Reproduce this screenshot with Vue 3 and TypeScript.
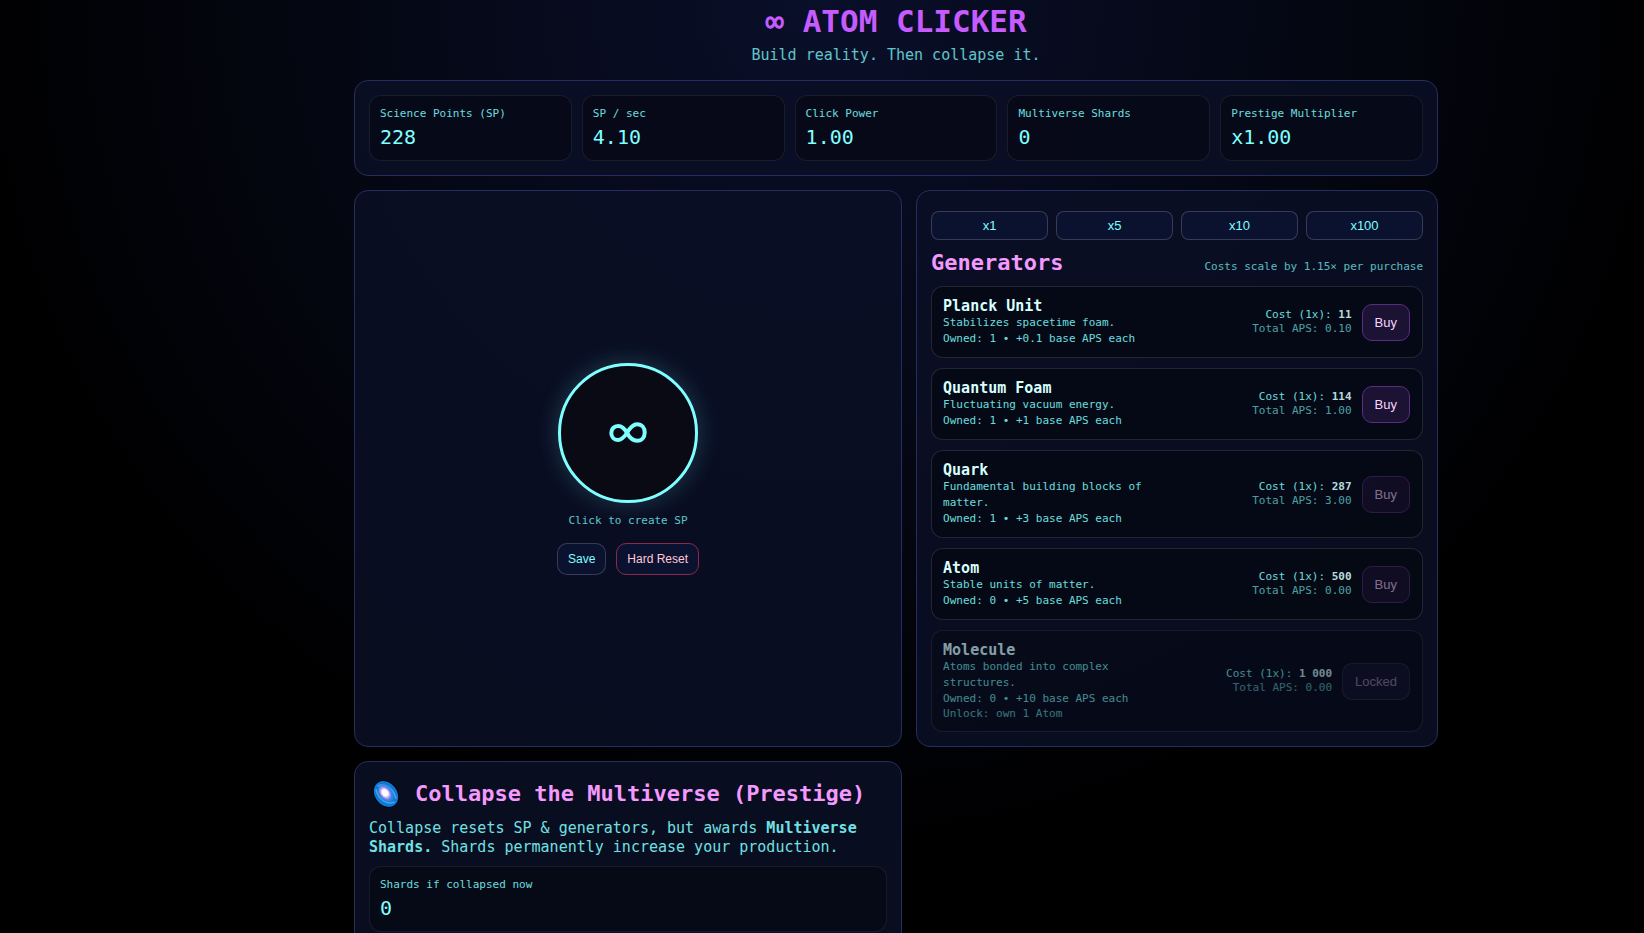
<script setup lang="ts">
import { ref } from 'vue'

interface Stat {
  label: string
  value: string
}

interface Generator {
  name: string
  description: string
  owned: number
  base: string
  cost: string
  total: string
  affordable: boolean
  unlock?: string
}

const stats: Stat[] = [
  { label: 'Science Points (SP)', value: '228' },
  { label: 'SP / sec', value: '4.10' },
  { label: 'Click Power', value: '1.00' },
  { label: 'Multiverse Shards', value: '0' },
  { label: 'Prestige Multiplier', value: 'x1.00' },
]

const amounts = [1, 5, 10, 100]
const amount = ref(1)

const generators: Generator[] = [
  { name: 'Planck Unit', description: 'Stabilizes spacetime foam.', owned: 1, base: '0.1', cost: '11', total: '0.10', affordable: true },
  { name: 'Quantum Foam', description: 'Fluctuating vacuum energy.', owned: 1, base: '1', cost: '114', total: '1.00', affordable: true },
  { name: 'Quark', description: 'Fundamental building blocks of matter.', owned: 1, base: '3', cost: '287', total: '3.00', affordable: false },
  { name: 'Atom', description: 'Stable units of matter.', owned: 0, base: '5', cost: '500', total: '0.00', affordable: false },
  { name: 'Molecule', description: 'Atoms bonded into complex structures.', owned: 0, base: '10', cost: '1 000', total: '0.00', affordable: false, unlock: 'own 1 Atom' },
]
</script>

<template>
  <div class="page">
    <main class="game">
      <header class="masthead">
        <h1>∞ ATOM CLICKER</h1>
        <p>Build reality. Then collapse it.</p>
      </header>

      <section class="panel stats">
        <div v-for="stat in stats" :key="stat.label" class="stat">
          <div class="stat-label">{{ stat.label }}</div>
          <div class="stat-value">{{ stat.value }}</div>
        </div>
      </section>

      <div class="columns">
        <section class="panel clicker">
          <button class="atom" type="button" aria-label="Create SP">
            <svg viewBox="0 0 38 22" width="38" height="22" aria-hidden="true">
              <path d="M18 11C15.500 6.500 12.800 4 9.200 4C5 4 2.300 7 2.300 11S5 18 8.800 18C12.600 18 15.200 15.200 18 11C21 5.500 24.200 2.200 28.200 2.200C32.800 2.200 35.700 5.600 35.700 10.500S32.800 18.800 28.200 18.800C24 18.800 20.800 16 18 11Z" />
            </svg>
          </button>
          <p class="hint">Click to create SP</p>
          <div class="actions">
            <button class="action" type="button">Save</button>
            <button class="action danger" type="button">Hard Reset</button>
          </div>
        </section>

        <section class="panel shop">
          <div class="amounts">
            <button v-for="n in amounts" :key="n" type="button" @click="amount = n">x{{ n }}</button>
          </div>
          <div class="shop-head">
            <h2>Generators</h2>
            <span>Costs scale by 1.15× per purchase</span>
          </div>
          <ul class="generators">
            <li v-for="g in generators" :key="g.name" class="generator" :class="{ locked: g.unlock }">
              <div class="info">
                <h3>{{ g.name }}</h3>
                <p>{{ g.description }}</p>
                <p>Owned: {{ g.owned }} • +{{ g.base }} base APS each</p>
                <p v-if="g.unlock" class="unlock">Unlock: {{ g.unlock }}</p>
              </div>
              <div class="cost">
                <div class="price">Cost ({{ amount }}x): <strong>{{ g.cost }}</strong></div>
                <div class="total">Total APS: {{ g.total }}</div>
              </div>
              <button class="buy" type="button" :disabled="!g.affordable">{{ g.unlock ? 'Locked' : 'Buy' }}</button>
            </li>
          </ul>
        </section>

        <section class="panel prestige">
          <h2>
            <svg class="galaxy" viewBox="0 0 33 30" width="33" height="30" aria-hidden="true">
              <g transform="rotate(52 17 15)">
                <ellipse cx="17" cy="15" rx="15" ry="12" fill="#020306" />
                <ellipse cx="17" cy="15" rx="14" ry="11" fill="#0d78d6" />
                <path d="M5.500 17C7 9 17 5.500 27 10M28.500 13C27 21 17 24.500 7 20" fill="none" stroke="#45a4ee" stroke-width="1.500" />
                <ellipse cx="16.500" cy="15" rx="9.500" ry="6.500" fill="#2f86e0" />
                <ellipse cx="15.500" cy="15" rx="7.500" ry="5" fill="#a48bf0" />
                <ellipse cx="15.500" cy="15" rx="5.400" ry="3.800" fill="#dccfff" />
                <ellipse cx="15.500" cy="15" rx="3.600" ry="3" fill="#ffffff" />
              </g>
            </svg>
            <span>Collapse the Multiverse (Prestige)</span>
          </h2>
          <p class="blurb">
            Collapse resets SP &amp; generators, but awards <strong>Multiverse</strong> <strong>Shards.</strong> Shards permanently increase your production.
          </p>
          <div class="stat">
            <div class="stat-label">Shards if collapsed now</div>
            <div class="stat-value">0</div>
          </div>
        </section>
      </div>
    </main>
  </div>
</template>

<style>
body {
  margin: 0;
  background: #000;
}
</style>

<style scoped>
.page {
  box-sizing: border-box;
  height: 100vh;
  overflow: hidden;
  padding-left: 148px;
  background: radial-gradient(circle at top, #0a0f2a, #000 70%);
  color: #7fffff;
  font-family: Consolas, "DejaVu Sans Mono", monospace;
  font-size: 15px;
  line-height: 19px;
}

h1, h2, h3, p, ul {
  margin: 0;
  padding: 0;
}

button {
  box-sizing: border-box;
  font-family: Arial, "Liberation Sans", sans-serif;
  line-height: 15px;
  cursor: pointer;
}

.game {
  max-width: 1084px;
  margin: 0 auto;
}

.masthead {
  padding: 2px 0 15px;
  text-align: center;
}

.masthead h1 {
  color: #c65cff;
  font-size: 31px;
  line-height: 38px;
}

.masthead p {
  margin-top: 6px;
  opacity: 0.75;
}

.panel {
  box-sizing: border-box;
  border: 1px solid #262e60;
  border-radius: 14px;
  padding: 14px;
  background: rgba(10, 15, 38, 0.85);
}

.stats {
  display: grid;
  grid-template-columns: repeat(5, 1fr);
  gap: 10px;
}

.stat {
  border: 1px solid rgba(255, 255, 255, 0.08);
  border-radius: 12px;
  padding: 10px;
  background: rgba(5, 7, 17, 0.6);
}

.stat-label {
  font-size: 11px;
  line-height: 16px;
  opacity: 0.85;
}

.stat-value {
  margin-top: 3px;
  padding-bottom: 1px;
  font-size: 20px;
  line-height: 24px;
}

.columns {
  display: grid;
  grid-template-columns: 1.05fr 1fr;
  gap: 14px;
  margin-top: 14px;
}

.clicker {
  display: flex;
  flex-direction: column;
  align-items: center;
  justify-content: center;
}

.atom {
  display: grid;
  place-items: center;
  width: 140px;
  height: 140px;
  border: 3px solid #7fffff;
  border-radius: 50%;
  padding: 0;
  background: #0a0a14;
  box-shadow: 0 0 24px rgba(125, 249, 255, 0.2);
}

.atom path {
  fill: none;
  stroke: #7fffff;
  stroke-width: 4;
}

.hint {
  margin-top: 10px;
  font-size: 11px;
  line-height: 16px;
  opacity: 0.75;
}

.actions {
  display: flex;
  gap: 10px;
  margin-top: 14px;
}

.action {
  border: 1px solid rgba(255, 255, 255, 0.18);
  border-radius: 10px;
  padding: 8px 10px;
  background: #0a1230;
  color: #7fffff;
  font-size: 12px;
  line-height: 14px;
}

.action.danger {
  border-color: #8a2a4c;
  color: #ffc9d6;
}

.amounts {
  display: grid;
  grid-template-columns: repeat(4, 1fr);
  gap: 8px;
  margin-top: 6px;
}

.amounts button {
  border: 1px solid rgba(255, 255, 255, 0.18);
  border-radius: 8px;
  padding: 6px;
  background: #0a1230;
  color: #7fffff;
  font-size: 13px;
}

.shop-head {
  display: flex;
  align-items: baseline;
  justify-content: space-between;
  margin: 9px 0;
}

h2 {
  color: #f49aff;
  font-size: 22px;
  line-height: 28px;
}

.shop-head span {
  font-size: 11px;
  opacity: 0.7;
}

.generators {
  display: grid;
  gap: 10px;
  list-style: none;
}

.generator {
  display: flex;
  align-items: center;
  gap: 10px;
  border: 1px solid rgba(255, 255, 255, 0.12);
  border-radius: 12px;
  padding: 10px 12px 10px 11px;
  background: rgba(4, 6, 14, 0.6);
}

.info {
  max-width: 220px;
}

.info h3 {
  color: #d8ffff;
  font-size: 15px;
  line-height: 18px;
}

.info p {
  font-size: 11px;
  line-height: 16px;
  opacity: 0.85;
}

.info .unlock {
  line-height: 14px;
  opacity: 0.7;
}

.cost {
  margin-left: auto;
  font-size: 11px;
  line-height: 14px;
  text-align: right;
}

.price {
  opacity: 0.85;
}

.price strong {
  color: #d8ffff;
}

.total {
  opacity: 0.6;
}

.buy {
  border: 1px solid #5a2d80;
  border-radius: 10px;
  padding: 10px 12px;
  background: #1c1233;
  color: #f3d6ff;
  font-size: 13px;
}

.buy:disabled {
  opacity: 0.5;
  cursor: not-allowed;
}

.locked {
  opacity: 0.6;
}

.locked .buy {
  border-color: rgba(255, 255, 255, 0.18);
}

.prestige h2 {
  display: flex;
  align-items: center;
  gap: 13px;
  margin-top: 3px;
}

.galaxy {
  flex: none;
}

.blurb {
  margin: 10px 0 9px;
  opacity: 0.88;
}
</style>
